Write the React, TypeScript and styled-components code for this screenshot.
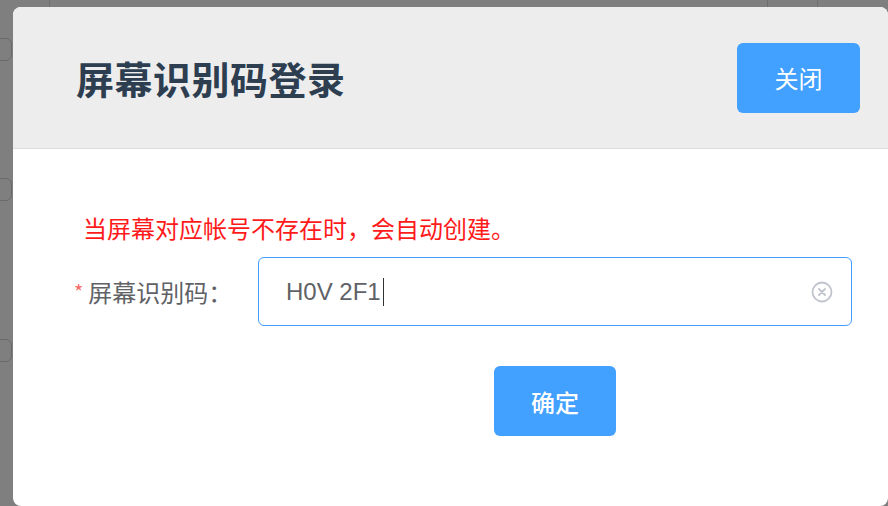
import React from "react";
import styled, { createGlobalStyle } from "styled-components";

const Global = createGlobalStyle`
  html, body { margin: 0; padding: 0; }
  body {
    width: 888px;
    height: 506px;
    overflow: hidden;
    font-family: "Noto Sans CJK SC", "Noto Sans", sans-serif;
    background: #ffffff;
  }
`;

const Page = styled.div`
  position: relative;
  width: 888px;
  height: 506px;
  overflow: hidden;
  background: #ffffff;
`;

/* underlying page, dimmed by the overlay */
const Backdrop = styled.div`
  display: flex;
  flex-direction: column;
  height: 100%;
  background:
    linear-gradient(#dcdfe6, #dcdfe6) 49px 0 / 1px 7px no-repeat,
    linear-gradient(#dcdfe6, #dcdfe6) 767px 0 / 1px 7px no-repeat,
    linear-gradient(#dcdfe6, #dcdfe6) 817px 0 / 1px 7px no-repeat;
`;

const GhostBox = styled.div<{ $top: number }>`
  margin-top: ${(p) => p.$top}px;
  margin-left: -20px;
  width: 32px;
  height: 23px;
  border: 1px solid #cfd2d8;
  border-radius: 6px;
  box-sizing: border-box;
`;

const Overlay = styled.div`
  position: absolute;
  inset: 0;
  background: rgba(0, 0, 0, 0.5);
  display: flex;
  align-items: flex-start;
  padding: 7px 0 0 13px;
`;

const Dialog = styled.div`
  width: 875px;
  height: 499px;
  background: #ffffff;
  border-radius: 8px;
  overflow: hidden;
  display: flex;
  flex-direction: column;
  flex-shrink: 0;
`;

const Header = styled.div`
  height: 141px;
  flex-shrink: 0;
  background: #ededed;
  border-bottom: 1px solid #dcdcdc;
  display: flex;
  align-items: center;
  justify-content: space-between;
  padding: 0 28px 0 63px;
`;

const Title = styled.h1`
  margin: 0;
  font-size: 38px;
  font-weight: 700;
  color: #2c3e50;
  letter-spacing: 0.5px;
`;

const Button = styled.button<{ $w: number; $bold?: boolean }>`
  width: ${(p) => p.$w}px;
  height: 70px;
  border: none;
  border-radius: 6px;
  background: #42a0ff;
  color: #ffffff;
  font-family: "Noto Sans CJK SC", sans-serif;
  font-size: 24px;
  font-weight: ${(p) => (p.$bold ? 500 : 400)};
  cursor: pointer;
  padding: 0;
`;

const Body = styled.div`
  display: flex;
  flex-direction: column;
  padding: 63px 0 0 61px;
`;

const Notice = styled.div`
  color: #ff1a1a;
  font-size: 24px;
  line-height: 32px;
  padding-left: 9px;
`;

const Row = styled.div`
  display: flex;
  align-items: center;
  margin-top: 13px;
`;

const Label = styled.label`
  width: 184px;
  flex-shrink: 0;
  font-size: 24px;
  color: #606266;
  display: flex;
  align-items: center;
`;

const Star = styled.span`
  color: #f56c6c;
  margin-right: 5px;
  font-size: 20px;
`;

const InputBox = styled.div`
  width: 594px;
  height: 69px;
  box-sizing: border-box;
  border: 1px solid #409eff;
  border-radius: 6px;
  display: flex;
  align-items: center;
  padding: 0 18px 0 27px;
`;

const InputText = styled.span`
  flex: 1;
  font-family: "Liberation Sans", Arial, sans-serif;
  font-size: 24px;
  color: #606266;
  display: flex;
  align-items: center;
`;

const Caret = styled.span`
  display: inline-block;
  width: 1px;
  height: 28px;
  background: #303133;
  margin-left: 2px;
`;

const Actions = styled.div`
  display: flex;
  justify-content: center;
  margin-top: 40px;
  margin-left: 184px;
  width: 594px;
`;

const ClearIcon = () => (
  <svg width="22" height="22" viewBox="0 0 22 22">
    <circle cx="11" cy="11" r="9.5" fill="none" stroke="#c0c4cc" strokeWidth="1.8" />
    <path d="M8 8 L14 14 M14 8 L8 14" stroke="#c0c4cc" strokeWidth="1.8" strokeLinecap="round" />
  </svg>
);

export default function App() {
  return (
    <Page>
      <Global />
      <Backdrop>
        <GhostBox $top={38} />
        <GhostBox $top={117} />
        <GhostBox $top={138} />
      </Backdrop>
      <Overlay>
        <Dialog>
          <Header>
            <Title>屏幕识别码登录</Title>
            <Button $w={123}>关闭</Button>
          </Header>
          <Body>
            <Notice>当屏幕对应帐号不存在时，会自动创建。</Notice>
            <Row>
              <Label>
                <Star>*</Star>屏幕识别码：
              </Label>
              <InputBox>
                <InputText>
                  H0V 2F1<Caret />
                </InputText>
                <ClearIcon />
              </InputBox>
            </Row>
            <Actions>
              <Button $w={122} $bold>
                确定
              </Button>
            </Actions>
          </Body>
        </Dialog>
      </Overlay>
    </Page>
  );
}
